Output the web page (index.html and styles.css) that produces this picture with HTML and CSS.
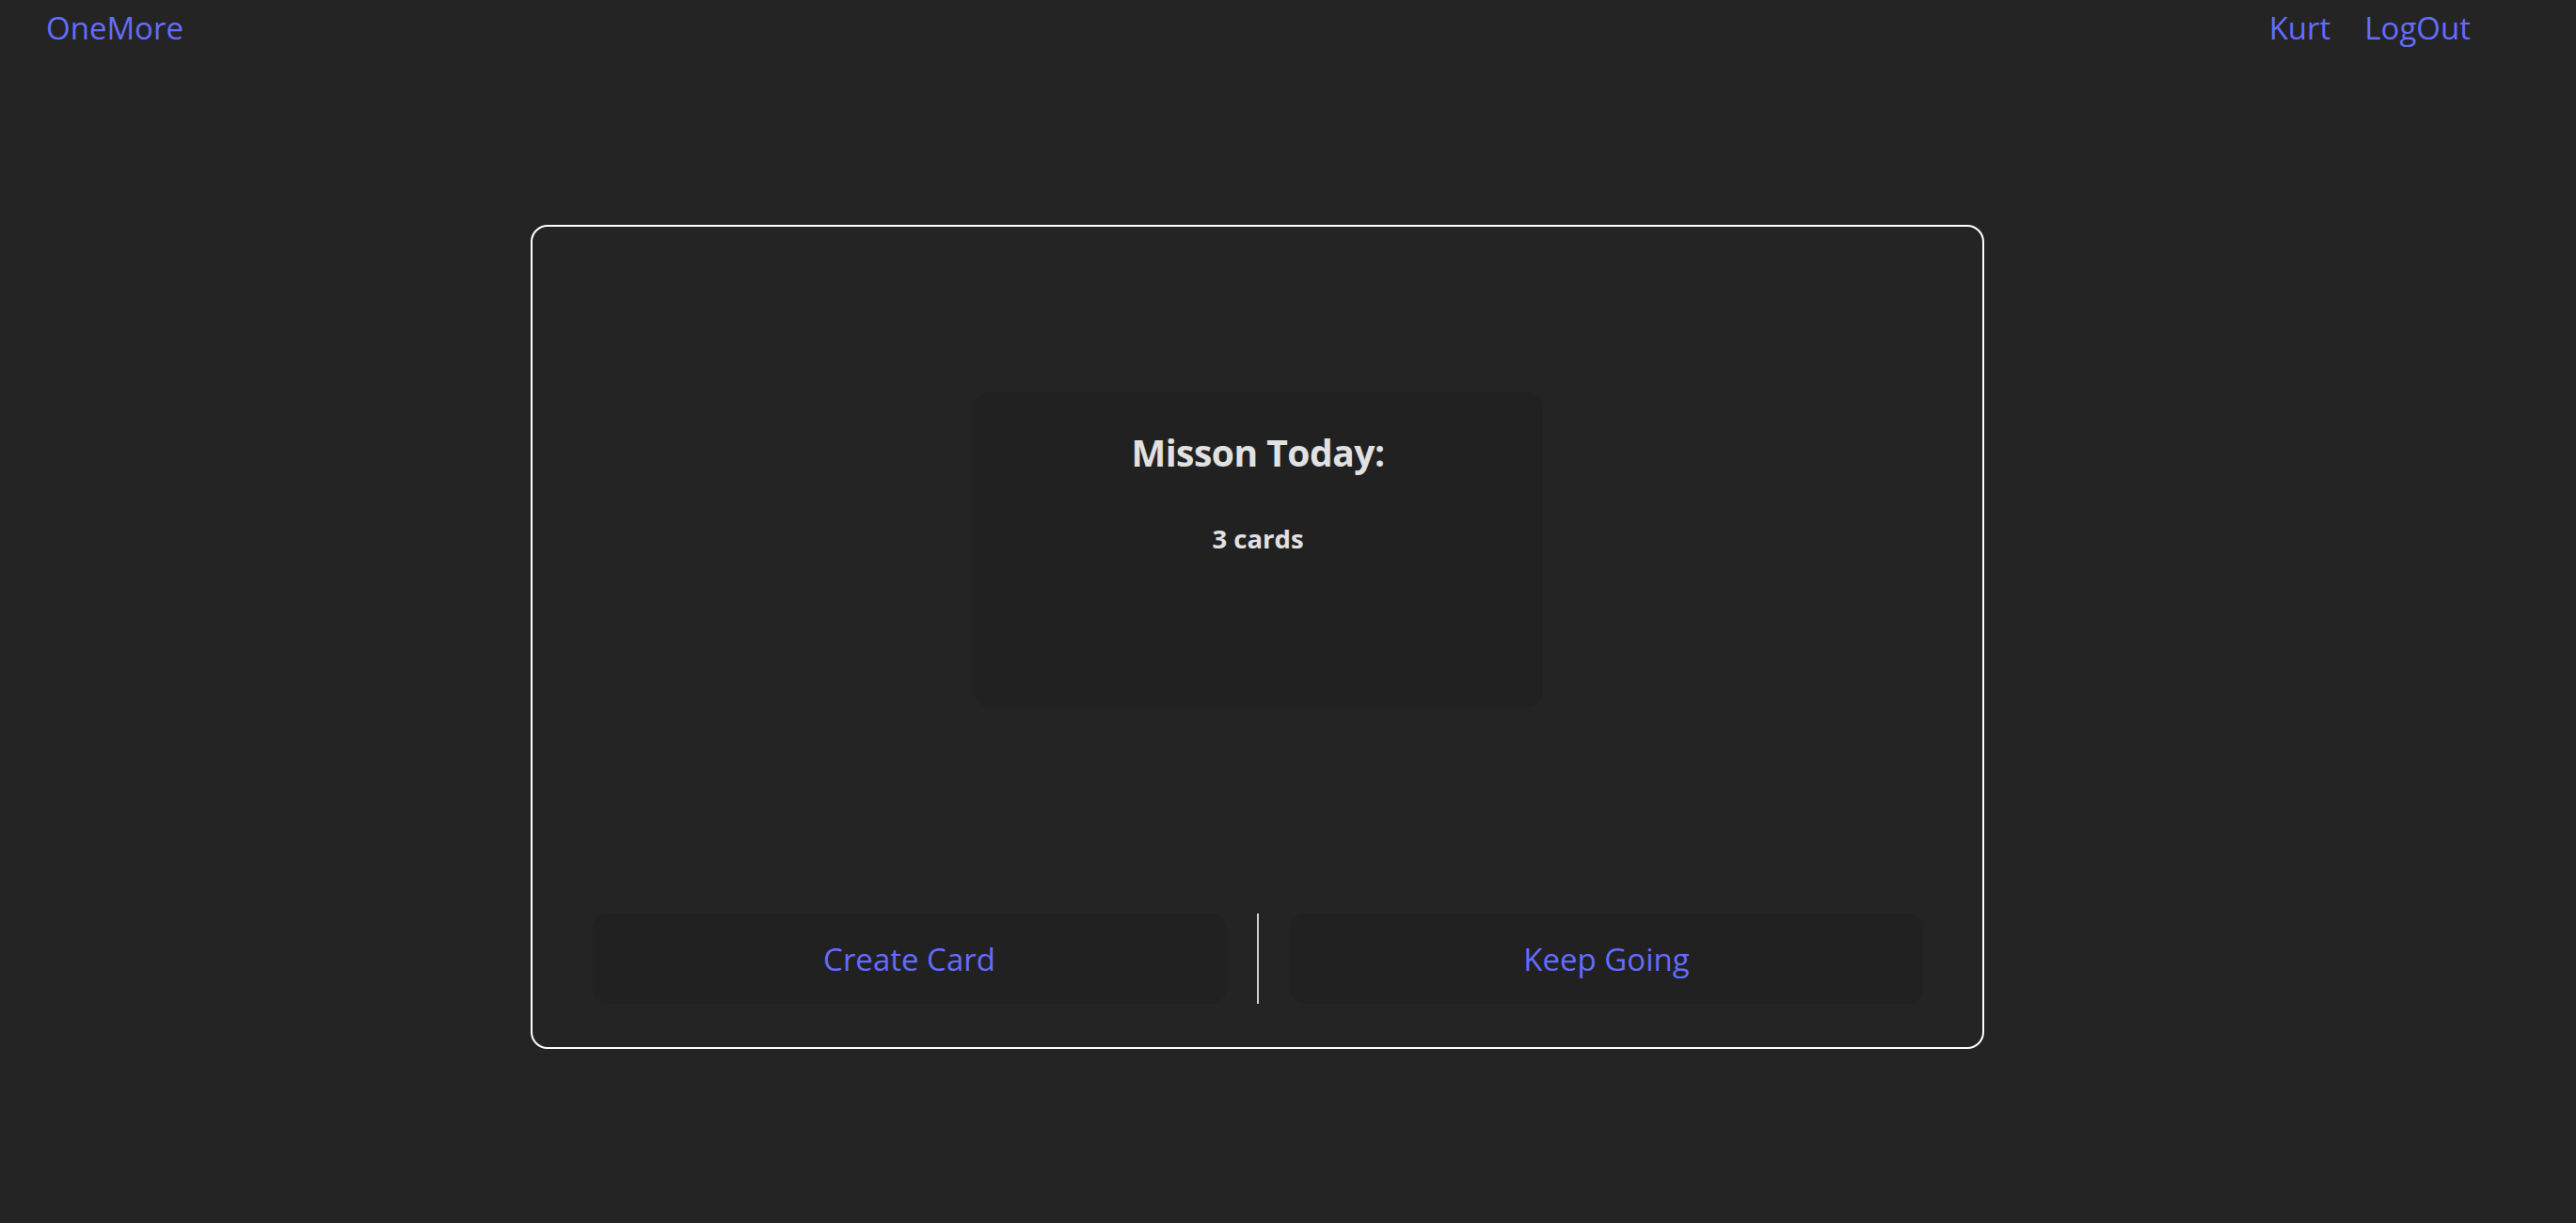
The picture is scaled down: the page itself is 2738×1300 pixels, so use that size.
FILE: index.html
```html
<!DOCTYPE html>
<html lang="en">
<head>
<meta charset="utf-8">
<title>OneMore</title>
<link rel="stylesheet" href="styles.css">
</head>
<body>
  <header class="topbar">
    <a class="brand" href="#">OneMore</a>
    <nav class="user-nav">
      <a class="nav-link" href="#">Kurt</a>
      <a class="nav-link" href="#">LogOut</a>
    </nav>
  </header>
  <main class="panel">
    <section class="mission">
      <h2 class="mission-title">Misson Today:</h2>
      <p class="mission-count">3 cards</p>
    </section>
    <div class="actions">
      <button class="action-btn">Create Card</button>
      <span class="divider"></span>
      <button class="action-btn">Keep Going</button>
    </div>
  </main>
</body>
</html>
```

FILE: styles.css
```css
html, body {
  margin: 0;
  padding: 0;
}
body {
  background: #242424;
  color: rgba(255, 255, 255, 0.87);
  font-family: "Open Sans", "Noto Sans", sans-serif;
  width: 2738px;
  height: 1300px;
  overflow: hidden;
}
a {
  color: #646cff;
  text-decoration: none;
}
.topbar {
  display: flex;
  justify-content: space-between;
  align-items: flex-start;
  padding: 10px 112px 0 49px;
  height: 60px;
  box-sizing: border-box;
}
.brand, .nav-link {
  font-size: 33px;
  line-height: 40px;
}
.user-nav {
  display: flex;
  gap: 36px;
}
.panel {
  box-sizing: border-box;
  margin: 179px 0 0 564px;
  width: 1545px;
  height: 876px;
  border: 2px solid #ffffff;
  border-radius: 18px;
  padding: 0 63px 46px 64px;
  display: flex;
  flex-direction: column;
  align-items: center;
}
.mission {
  margin-top: 176px;
  width: 605px;
  height: 335px;
  box-sizing: border-box;
  background: #212121;
  border-radius: 17px;
  padding-top: 39px;
  display: flex;
  flex-direction: column;
  align-items: center;
}
.mission-title {
  margin: 0;
  font-size: 39px;
  line-height: 50px;
  letter-spacing: -0.5px;
  font-weight: 700;
  color: #e1e1e1;
}
.mission-count {
  margin: 50px 0 0;
  font-size: 27.5px;
  line-height: 33px;
  font-weight: 700;
  color: #e1e1e1;
}
.actions {
  margin-top: auto;
  align-self: stretch;
  display: flex;
  align-items: stretch;
  gap: 33px;
  height: 96px;
}
.action-btn {
  flex: 1;
  border: none;
  border-radius: 16px;
  background: #212121;
  color: #646cff;
  font-family: "Open Sans", "Noto Sans", sans-serif;
  font-size: 33px;
  line-height: 33px;
  padding: 0;
  cursor: pointer;
}
.divider {
  width: 2px;
  background: #d0d0d0;
}
```
